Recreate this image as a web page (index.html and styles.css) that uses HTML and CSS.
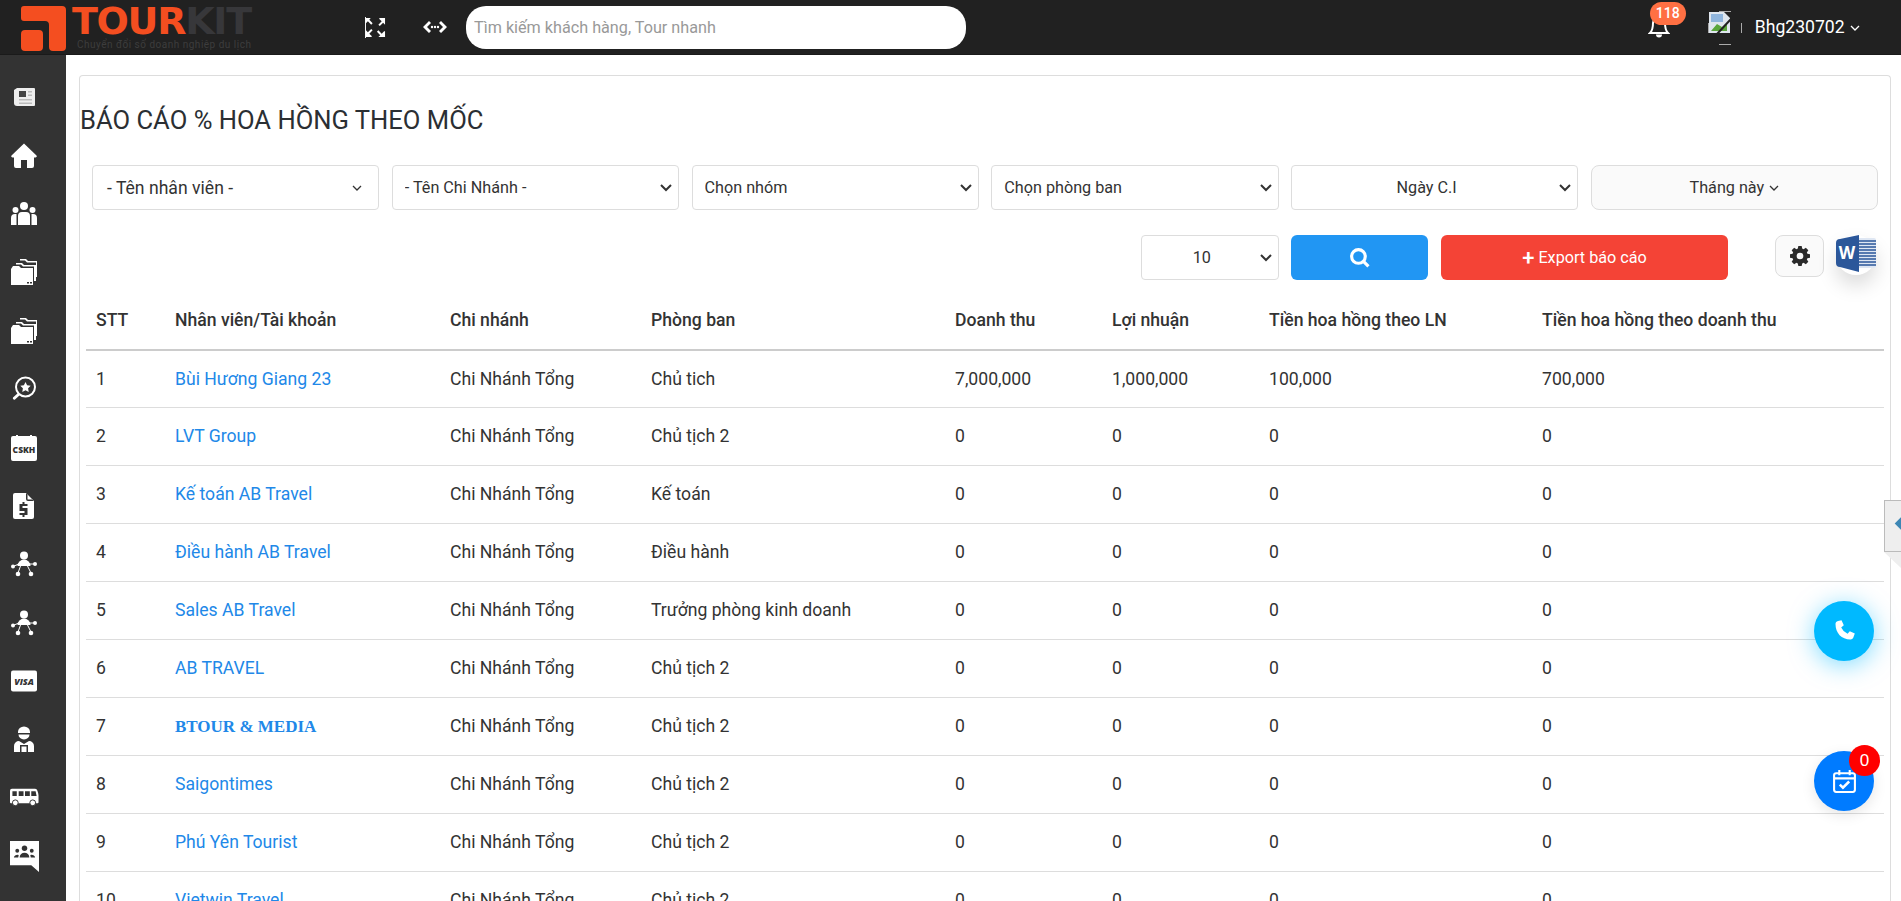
FILE: index.html
```html
<!DOCTYPE html>
<html lang="en">
<head>
    <meta charset="UTF-8">
    <meta name="viewport" content="width=device-width, initial-scale=1.0">
    <title>Báo cáo % hoa hồng theo mốc</title>
    <link rel="stylesheet" href="styles.css">
</head>
<body>
    <header class="topbar">
        <div class="logo">
            <svg class="logo-mark" viewBox="0 0 46 46"><path fill="#f44e20" d="M3 0H41a4 4 0 0 1 4 4V41a4 4 0 0 1-4 4H32a4 4 0 0 1-4-4V19a4 4 0 0 0-4-4H3a3 3 0 0 1-3-3V3a3 3 0 0 1 3-3ZM4 24H18a4 4 0 0 1 4 4V41a4 4 0 0 1-4 4H4a4 4 0 0 1-4-4V28a4 4 0 0 1 4-4Z"/></svg>
            <div class="logo-text">
                <div class="logo-name"><span class="logo-tour">TOUR</span><span class="logo-kit">KIT</span></div>
                <div class="logo-sub">Chuyển đổi số doanh nghiệp du lịch</div>
            </div>
        </div>
        <svg class="top-icon expand" viewBox="0 0 22 22" fill="#fff"><path d="M0 0v1.5L1 1h5L4.500 3 8 6.500 6.500 8 3 4.500 1 6.500ZM21 1v7l-2-2-3.500 3.500L14 8l3.500-3.500L15 2V1ZM1 21v-7l2 2 3.500-3.500L8 14l-3.500 3.500L7 20v1ZM21 21h-7l2-2-3.500-3.500L14 14l3.500 3.500L20 15h1Z"/><path d="M0 0h1v22H0z"/></svg>
        <svg class="top-icon arrows" viewBox="0 0 24 14" fill="#fff"><path d="M6 1l2 2-4 4 4 4-2 2-6-6ZM18 1l-2 2 4 4-4 4 2 2 6-6Z"/><circle cx="9" cy="7" r="1.200"/><circle cx="12" cy="7" r="1.200"/><circle cx="15" cy="7" r="1.200"/></svg>
        <input class="top-search" type="text" placeholder="Tìm kiếm khách hàng, Tour nhanh">
        <div class="top-right">
            <div class="bell">
                <svg viewBox="0 0 22 24" fill="none" stroke="#fff" stroke-width="2"><path d="M11 3a6 6 0 0 0-6 6c0 6-1 8-3 10h18c-2-2-3-4-3-10a6 6 0 0 0-6-6Z"/><path fill="#fff" stroke="none" d="M8 20.500h6a3 3 0 0 1-6 0Z"/></svg>
                <span class="bell-count">118</span>
            </div>
            <div class="avatar">
                <svg viewBox="0 0 34 34" fill="none">
                    <path fill="#dfe6ee" d="M1 1h15l6 6v15H1Z"/>
                    <path fill="#8fb5dd" d="M3 3h12v8H3Z"/>
                    <path fill="#5aa63c" d="M3 20l6-7 5 3 5-4v8Z"/>
                    <path stroke="#222" stroke-width="2" d="M23 8L9 23"/>
                    <path stroke="#aaa" d="M11 .5h12M11 33.500h12M.5 12v10M33.500 12v10"/>
                </svg>
            </div>
            <div class="user">Bhg230702 <svg class="chev" viewBox="0 0 10 6" fill="none" stroke="#fff" stroke-width="1.300"><path d="M1 1l4 4 4-4"/></svg></div>
        </div>
    </header>

    <div class="layout">
        <nav class="sidebar">
            <a class="side-item"><svg viewBox="0 0 26 26"><path fill="#eee" d="M3 6l3-2h17a1 1 0 0 1 1 1v16a1 1 0 0 1-1 1H6a3 3 0 0 1-3-3Z"/><path fill="#444" d="M8 7h7v6H8Z"/><path fill="#bbb" d="M17 7h4v1.500h-4ZM17 10.500h4V12h-4ZM8 15h13v1.500H8ZM8 18.500h13V20H8Z"/></svg></a>
            <a class="side-item"><svg viewBox="0 0 26 26"><path fill="#fff" d="M13 .500L.500 12.500c-.700 1 0 2 1 2H3V23a2 2 0 0 0 2 2h5v-8h6v8h5a2 2 0 0 0 2-2v-8.500h1.500c1 0 1.700-1 1-2Z"/></svg></a>
            <a class="side-item"><svg viewBox="0 0 26 26" fill="#fff"><circle cx="13" cy="5" r="4"/><circle cx="4.500" cy="9" r="3"/><circle cx="21.500" cy="9" r="3"/><path d="M7 24v-9a4 4 0 0 1 4-4h4a4 4 0 0 1 4 4v9ZM0 24v-7a4 4 0 0 1 4-4h1.500v11ZM26 24v-7a4 4 0 0 0-4-4h-1.500v11Z"/></svg></a>
            <a class="side-item"><svg viewBox="0 0 26 26"><use href="#folders"/></svg></a>
            <a class="side-item"><svg viewBox="0 0 26 26"><use href="#folders"/></svg></a>
            <a class="side-item"><svg viewBox="0 0 26 26"><circle cx="14.500" cy="11" r="9.500" fill="none" stroke="#fff" stroke-width="2"/><path fill="#fff" d="M14.500 6l1.600 3.300 3.600.5-2.600 2.500.6 3.600-3.200-1.700-3.200 1.700.6-3.600-2.600-2.500 3.600-.5ZM7 17l2 2-5 4.500a1.500 1.500 0 0 1-2-2Z"/></svg></a>
            <a class="side-item"><svg viewBox="0 0 26 26"><path fill="#fff" d="M2 1h3V0h2v1h12V0h2v1h3a2 2 0 0 1 2 2v21a2 2 0 0 1-2 2H2a2 2 0 0 1-2-2V3a2 2 0 0 1 2-2Z"/><text class="cskh" x="13" y="18">CSKH</text></svg></a>
            <a class="side-item"><svg viewBox="0 0 26 26"><path fill="#fff" fill-rule="evenodd" d="M4 0h11l8 8v16a2 2 0 0 1-2 2H4a2 2 0 0 1-2-2V2a2 2 0 0 1 2-2Z"/><path fill="#333" d="M15 0v6a2 2 0 0 0 2 2h6l-2-1.500h-4a.5.5 0 0 1-.5-.5V1.500ZM11.500 9h2v2h3v2h-5v2h5v7h-3v2h-2v-2h-3v-2h5v-2h-5v-7h3Z"/></svg></a>
            <a class="side-item"><svg viewBox="0 0 26 26"><use href="#network"/></svg></a>
            <a class="side-item"><svg viewBox="0 0 26 26"><use href="#network"/></svg></a>
            <a class="side-item"><svg viewBox="0 0 26 22"><rect width="26" height="21" y=".5" rx="2" fill="#fff"/><text class="visa" x="13" y="15">VISA</text></svg></a>
            <a class="side-item"><svg viewBox="0 0 26 26"><path fill="#fff" d="M7 6a6 5.500 0 0 1 12 0v1H7ZM7.500 8.500h11a5.500 5 0 0 1-11 0ZM3 26v-6a5 5 0 0 1 5-5l5 3 5-3a5 5 0 0 1 5 5v6Z"/><path fill="#333" d="M9 19h8v7h-1.500v-5.500h-5V26H9Z"/></svg></a>
            <a class="side-item wide"><svg viewBox="0 0 30 18"><path fill="#fff" d="M2 0h24c2 0 3 3 3.500 7v7a1 1 0 0 1-1 1H1a1 1 0 0 1-1-1V2a2 2 0 0 1 2-2Z"/><path fill="#333" d="M2.500 2.500H7v5H2.500ZM9 2.500h5v5H9ZM15.500 2.500h5v5h-5ZM22 2.500h4.500l1 5H22Z"/><circle cx="5.500" cy="14.500" r="3" fill="#fff" stroke="#333"/><circle cx="23.500" cy="14.500" r="3" fill="#fff" stroke="#333"/></svg></a>
            <a class="side-item wide"><svg viewBox="0 0 30 32"><path fill="#fff" d="M0 0h30v32l-8-7H0Z"/><g fill="#333"><circle cx="15" cy="7.500" r="2.800"/><circle cx="7.500" cy="10" r="2"/><circle cx="22.500" cy="10" r="2"/><path d="M10 17a5 5 0 0 1 10 0ZM4 17a3.500 3 0 0 1 5-2.500L8.500 17ZM26 17a3.500 3 0 0 0-5-2.500l.5 2.500Z"/></g></svg></a>
        </nav>

        <main class="content">
            <div class="card">
                <h1 class="page-title">BÁO CÁO % HOA HỒNG THEO MỐC</h1>
                <div class="filters">
                    <div class="picker span-2">- Tên nhân viên - <svg class="chev dark" viewBox="0 0 10 6" fill="none" stroke="#333" stroke-width="1.300"><path d="M1 1l4 4 4-4"/></svg></div>
                    <select class="field span-2"><option>- Tên Chi Nhánh -</option></select>
                    <select class="field span-2"><option>Chọn nhóm</option></select>
                    <select class="field span-2"><option>Chọn phòng ban</option></select>
                    <select class="field center span-2"><option>Ngày C.I</option></select>
                    <button class="month span-2">Tháng này <svg class="chev dark" viewBox="0 0 10 6" fill="none" stroke="#333" stroke-width="1.300"><path d="M1 1l4 4 4-4"/></svg></button>

                    <select class="field center limit"><option>10</option></select>
                    <button class="btn btn-search"><svg viewBox="0 0 20 20" fill="none" stroke="#fff" stroke-width="3"><circle cx="9" cy="9" r="6.500"/><path d="M13.500 13.500L18.500 18.500"/></svg></button>
                    <button class="btn btn-export span-2"><span class="plus">+</span> Export báo cáo</button>
                    <div class="tools">
                        <button class="btn-gear"><svg viewBox="0 0 24 24"><path fill="#2b2b2b" fill-rule="evenodd" d="M10 1h4l.6 3.100 1.700.7L19 3l3 3-1.800 2.700.7 1.700L24 11v4l-3.100.6-.7 1.700L22 20l-3 3-2.700-1.800-1.700.7L14 25h-4l-.6-3.100-1.700-.7L5 23l-3-3 1.800-2.700-.7-1.700L0 15v-4l3.100-.6.700-1.700L2 6l3-3 2.700 1.800 1.700-.7ZM12 9a4 4 0 1 0 0 8 4 4 0 0 0 0-8Z" transform="translate(0 -1)"/></svg></button>
                        <div class="word">
                            <svg viewBox="0 0 40 38"><rect x="20" y="3" width="20" height="30" rx="2" fill="#dfe7f3"/><path stroke="#2b579a" stroke-width="1.300" d="M20 6h20M20 9h20M20 12h20M20 15h20M20 18h20M20 21h20M20 24h20M20 27h20M20 30h20"/><path fill="#2b579a" d="M23 0v37L4 32a4 4 0 0 1-4-4V8a4 4 0 0 1 4-4Z"/><text class="word-w" x="11" y="24">W</text></svg>
                        </div>
                    </div>
                </div>

                <table class="report">
                    <thead>
                        <tr>
                            <th class="c-stt">STT</th>
                            <th class="c-name">Nhân viên/Tài khoản</th>
                            <th class="c-branch">Chi nhánh</th>
                            <th class="c-dept">Phòng ban</th>
                            <th class="c-num">Doanh thu</th>
                            <th class="c-num">Lợi nhuận</th>
                            <th class="c-ln">Tiền hoa hồng theo LN</th>
                            <th>Tiền hoa hồng theo doanh thu</th>
                        </tr>
                    </thead>
                    <tbody>
                        <tr><td>1</td><td><a>Bùi Hương Giang 23</a></td><td>Chi Nhánh Tổng</td><td>Chủ tich</td><td>7,000,000</td><td>1,000,000</td><td>100,000</td><td>700,000</td></tr>
                        <tr><td>2</td><td><a>LVT Group</a></td><td>Chi Nhánh Tổng</td><td>Chủ tịch 2</td><td>0</td><td>0</td><td>0</td><td>0</td></tr>
                        <tr><td>3</td><td><a>Kế toán AB Travel</a></td><td>Chi Nhánh Tổng</td><td>Kế toán</td><td>0</td><td>0</td><td>0</td><td>0</td></tr>
                        <tr><td>4</td><td><a>Điều hành AB Travel</a></td><td>Chi Nhánh Tổng</td><td>Điều hành</td><td>0</td><td>0</td><td>0</td><td>0</td></tr>
                        <tr><td>5</td><td><a>Sales AB Travel</a></td><td>Chi Nhánh Tổng</td><td>Trưởng phòng kinh doanh</td><td>0</td><td>0</td><td>0</td><td>0</td></tr>
                        <tr><td>6</td><td><a>AB TRAVEL</a></td><td>Chi Nhánh Tổng</td><td>Chủ tịch 2</td><td>0</td><td>0</td><td>0</td><td>0</td></tr>
                        <tr><td>7</td><td><a class="serif">BTOUR &amp; MEDIA</a></td><td>Chi Nhánh Tổng</td><td>Chủ tịch 2</td><td>0</td><td>0</td><td>0</td><td>0</td></tr>
                        <tr><td>8</td><td><a>Saigontimes</a></td><td>Chi Nhánh Tổng</td><td>Chủ tịch 2</td><td>0</td><td>0</td><td>0</td><td>0</td></tr>
                        <tr><td>9</td><td><a>Phú Yên Tourist</a></td><td>Chi Nhánh Tổng</td><td>Chủ tịch 2</td><td>0</td><td>0</td><td>0</td><td>0</td></tr>
                        <tr><td>10</td><td><a>Vietwin Travel</a></td><td>Chi Nhánh Tổng</td><td>Chủ tịch 2</td><td>0</td><td>0</td><td>0</td><td>0</td></tr>
                    </tbody>
                </table>
            </div>
        </main>
    </div>

    <div class="side-tab">
        <svg viewBox="0 0 16 20"><path fill="#3d87b5" d="M10 0v20L0 10Z"/><path fill="#6fb3d6" d="M10 0v20l6-10Z"/></svg>
    </div>
    <button class="float-btn phone">
        <svg viewBox="0 0 24 24"><path fill="#fff" d="M6 2l3.500-.8 2.300 5-2.600 2.200a13 13 0 0 0 6.400 6.400l2.200-2.600 5 2.300L21.500 18c-.3 1.500-1.500 2.500-3 2.500C9.500 20.500 3.500 14 3.500 5c0-1.500 1-2.700 2.500-3Z"/></svg>
    </button>
    <button class="float-btn tasks">
        <svg viewBox="0 0 24 24" fill="none" stroke="#fff" stroke-width="2"><rect x="2" y="4" width="20" height="18" rx="2"/><path d="M2 9h20M7 1v5M17 1v5"/><path stroke-width="2.400" d="M7.500 15l3 3 6-6"/></svg>
        <span class="tasks-count">0</span>
    </button>

    <svg class="defs" width="0" height="0">
        <defs>
            <g id="folders" fill="#fff">
                <path d="M0 10l2-3h6l2 2h12v17H0Z"/>
                <path fill="#333" d="M16 23h2v1.500h-2ZM19 23h2v1.500h-2Z"/>
                <path d="M5 4h6l2 2h12v16h-2V7.500H12l-2-2H5ZM9 0h6l2 2h9v16h-1V3.500H16l-2-2H9Z"/>
            </g>
            <g id="network" fill="#fff">
                <circle cx="13" cy="4.500" r="4"/>
                <path d="M6.500 15a6.500 6.500 0 0 1 13 0Z"/>
                <circle cx="2" cy="15.500" r="2"/>
                <circle cx="24" cy="13" r="2"/>
                <circle cx="7" cy="23" r="2.300"/>
                <circle cx="20" cy="23" r="2.300"/>
                <path stroke="#fff" d="M3 15l5-2M23 13l-5 0M9.500 15L7 22M16.500 15l3.500 7"/>
            </g>
        </defs>
    </svg>
</body>
</html>
```

FILE: styles.css
```css
* {
    box-sizing: border-box;
}

html, body {
    height: 100%;
}

body {
    margin: 0;
    overflow: hidden;
    font-family: Roboto, sans-serif;
    font-size: 17.600px;
    color: #333;
    background-color: #fff;
}

.defs {
    position: absolute;
}

/* top bar */
.topbar {
    display: flex;
    align-items: center;
    height: 55px;
    padding-left: 21px;
    background-color: #212121;
    border-bottom: 1px solid #1a1a1a;
}

.logo {
    display: flex;
    width: 344px;
    height: 48px;
}

.logo-mark {
    width: 46px;
    height: 46px;
    margin-top: 3px;
}

.logo-text {
    margin-left: 5px;
}

.logo-name {
    height: 36px;
    font-family: "DejaVu Sans", sans-serif;
    font-size: 38px;
    font-weight: bold;
    line-height: 36px;
    letter-spacing: -1.300px;
}

.logo-tour {
    color: #f44e20;
}

.logo-kit {
    color: #37373a;
}

.logo-sub {
    margin-left: 5px;
    font-size: 10px;
    line-height: 11px;
    letter-spacing: .5px;
    color: #3d3d3d;
}

.top-icon {
    flex: none;
}

.expand {
    width: 21px;
    height: 21px;
}

.arrows {
    width: 24px;
    height: 14px;
    margin-left: 37px;
}

.top-search {
    width: 500px;
    height: 43px;
    margin-left: 19px;
    padding: 0 8px;
    border: none;
    border-radius: 20px;
    background-color: #fff;
    font-family: Roboto, sans-serif;
    font-size: 16.200px;
}

.top-search::placeholder {
    color: #999;
}

.top-right {
    display: flex;
    align-items: center;
    margin-left: auto;
    padding-right: 41px;
}

.bell {
    position: relative;
    width: 22px;
    height: 24px;
    margin-top: -2px;
}

.bell svg {
    display: block;
    width: 22px;
    height: 24px;
}

.bell-count {
    position: absolute;
    left: 2px;
    top: -12px;
    width: 36px;
    height: 23px;
    border-radius: 12px;
    background-color: #ff7043;
    color: #fff;
    font-size: 14px;
    font-weight: 500;
    line-height: 23px;
    text-align: center;
}

.avatar {
    width: 34px;
    height: 34px;
    margin: 2px 0 0 38px;
}

.avatar svg {
    display: block;
    width: 34px;
    height: 34px;
}

.user {
    margin-left: 13px;
    color: #fff;
    font-size: 17.600px;
}

.chev {
    width: 10px;
    height: 6px;
    margin-left: 1px;
    vertical-align: 2px;
}

/* page */
.layout {
    display: flex;
    height: calc(100vh - 55px);
}

.sidebar {
    flex: none;
    width: 66px;
    padding-top: 13px;
    background-color: #333;
}

.side-item {
    display: flex;
    align-items: center;
    height: 58.400px;
    padding-left: 11px;
}

.side-item svg {
    width: 26px;
    height: 26px;
}

.side-item.wide {
    padding-left: 10px;
}

.side-item.wide svg {
    width: 29px;
    height: 31px;
}

.cskh {
    font-family: "Open Sans", sans-serif;
    font-size: 8.500px;
    font-weight: 800;
    text-anchor: middle;
    fill: #333;
}

.visa {
    font-family: "Open Sans", sans-serif;
    font-size: 9px;
    font-weight: 800;
    font-style: italic;
    text-anchor: middle;
    fill: #333;
}

.word-w {
    font-family: "Open Sans", sans-serif;
    font-size: 17px;
    font-weight: 700;
    text-anchor: middle;
    fill: #fff;
}

.content {
    flex: 1;
    min-width: 0;
    padding: 20px 10px 0 13px;
    overflow: hidden;
}

.card {
    min-height: 100%;
    padding-top: 1px;
    border: 1px solid #ddd;
    border-bottom: none;
    border-radius: 4px 4px 0 0;
}

.page-title {
    margin: 27px 0 29px;
    font-size: 25.600px;
    font-weight: 400;
    line-height: 32px;
    color: #2b2f33;
}

.filters {
    display: grid;
    grid-template-columns: repeat(12, 1fr);
    gap: 25px 12.500px;
    padding: 0 12px;
}

.span-2 {
    grid-column: span 2;
}

.picker,
.field,
.month {
    height: 45px;
    border: 1px solid #ddd;
    border-radius: 4px;
    font-family: Roboto, sans-serif;
    font-size: 16.200px;
    color: #333;
}

.picker {
    display: flex;
    align-items: center;
    justify-content: space-between;
    padding: 0 16px 0 14px;
    font-size: 17.600px;
}

.field {
    appearance: none;
    padding: 0 24px 0 12px;
    background: #fff url("data:image/svg+xml,%3Csvg xmlns='http://www.w3.org/2000/svg' viewBox='0 0 12 8' fill='none' stroke='%23333' stroke-width='2'%3E%3Cpath d='M1 1l5 5 5-5'/%3E%3C/svg%3E") no-repeat right 6px center / 12px 8px;
}

.center {
    padding-right: 28px;
    text-align-last: center;
}

.limit {
    grid-column: 8;
}

.month {
    border-radius: 8px;
    background-color: #fafafa;
}

.btn {
    height: 45px;
    border: none;
    border-radius: 6px;
    color: #fff;
    font-family: Roboto, sans-serif;
    font-size: 16.200px;
    cursor: pointer;
}

.btn-search {
    background-color: #2196f3;
}

.btn-search svg {
    width: 21px;
    height: 21px;
    vertical-align: middle;
}

.btn-export {
    background-color: #f44336;
}

.plus {
    font-size: 22px;
    font-weight: 500;
    line-height: 16px;
    vertical-align: -2px;
}

.tools {
    display: flex;
    justify-content: flex-end;
    padding-right: 2px;
}

.btn-gear {
    width: 49px;
    height: 42px;
    padding: 0;
    border: 1px solid #ddd;
    border-radius: 8px;
    background-color: #fafafa;
}

.btn-gear svg {
    width: 20px;
    height: 20px;
    vertical-align: middle;
}

.word {
    width: 40px;
    height: 40px;
    margin-left: 12px;
    padding-top: 0;
    border-radius: 50%;
    box-shadow: 0 10px 20px rgba(0, 0, 0, .15);
}

.word svg {
    display: block;
    width: 40px;
    height: 38px;
}

/* table */
.report {
    width: 1798px;
    margin: 0 6px;
    border-collapse: collapse;
    table-layout: fixed;
}

.report th {
    height: 70px;
    padding: 10px 10px 0;
    border-bottom: 2px solid #ccc;
    font-weight: 500;
    text-align: left;
}

.report td {
    height: 58px;
    padding: 0 10px;
    border-bottom: 1px solid #ddd;
}

.report tbody tr:first-child td {
    height: 57px;
}

.report a {
    color: #2188e8;
}

.report .serif {
    font-family: "Liberation Serif", serif;
    font-size: 17px;
    font-weight: 700;
}

.c-stt {
    width: 79px;
}

.c-name {
    width: 275px;
}

.c-branch {
    width: 201px;
}

.c-dept {
    width: 304px;
}

.c-num {
    width: 157px;
}

.c-ln {
    width: 273px;
}

/* things floating over the page */
.side-tab {
    position: absolute;
    right: 0;
    top: 500px;
    width: 17px;
    height: 52px;
    padding: 14px 0 0 9px;
    border: 1px solid #bbb;
    border-right: none;
    background-color: #eee;
}

.side-tab svg {
    display: block;
    width: 15px;
    height: 17px;
}

/* folded corner under the tab */
.side-tab::after {
    content: "";
    position: absolute;
    left: -1px;
    top: 51px;
    border-top: 16px solid #eee;
    border-left: 0 solid transparent;
    border-right: 17px solid transparent;
    transform: scaleX(-1);
}

.float-btn {
    position: absolute;
    left: 1814px;
    width: 60px;
    height: 60px;
    padding: 0;
    border: none;
    border-radius: 50%;
}

.phone {
    top: 601px;
    background-color: #00b9ff;
    box-shadow: 0 4px 24px rgba(0, 185, 255, .5);
}

.phone svg {
    width: 24px;
    height: 24px;
    vertical-align: middle;
}

.tasks {
    top: 751px;
    background-color: #007bff;
    box-shadow: 0 4px 14px rgba(0, 0, 0, .1);
}

.tasks svg {
    width: 25px;
    height: 27px;
    vertical-align: middle;
}

.tasks-count {
    position: absolute;
    left: 35px;
    top: -6px;
    width: 31px;
    height: 31px;
    border-radius: 50%;
    background-color: #f00;
    color: #fff;
    font-size: 17px;
    line-height: 31px;
    text-align: center;
}
```
